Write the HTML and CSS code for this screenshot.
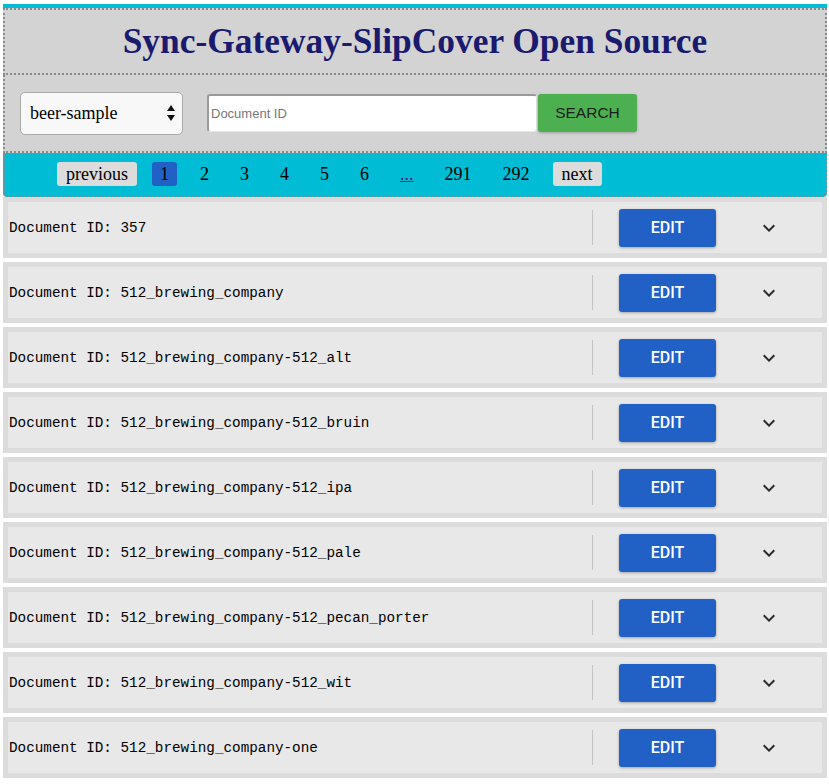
FILE: index.html
```html
<!DOCTYPE html>
<html>
<head>
<meta charset="utf-8">
<title>Sync-Gateway-SlipCover Open Source</title>
<link rel="stylesheet" href="styles.css">
</head>
<body>
<div class="app">
  <header class="title-box">
    <h1 class="title">Sync-Gateway-SlipCover Open Source</h1>
  </header>
  <section class="search-box">
    <div class="select-wrap">
      <select class="db-select"><option>beer-sample</option></select>
      <svg class="select-arrows" width="10" height="18" viewBox="0 0 10 18"><path d="M5 1 L9 7 L1 7 Z M1 11 L9 11 L5 17 Z" fill="#111"/></svg>
    </div>
    <input class="doc-input" type="text" placeholder="Document ID">
    <button class="search-btn">SEARCH</button>
  </section>
  <nav class="pager">
    <button class="pg-btn">previous</button>
    <span class="pg active">1</span>
    <span class="pg">2</span>
    <span class="pg">3</span>
    <span class="pg">4</span>
    <span class="pg">5</span>
    <span class="pg">6</span>
    <a class="pg link" href="#">...</a>
    <span class="pg">291</span>
    <span class="pg">292</span>
    <button class="pg-btn">next</button>
  </nav>
  <ul class="docs">
    <li class="doc"><div class="doc-inner"><span class="doc-id">Document ID: 357</span><span class="divider"></span><button class="edit-btn">EDIT</button><span class="chev"><svg width="24" height="24" viewBox="0 0 24 24"><path d="M16.59 8.59L12 13.17 7.41 8.59 6 10l6 6 6-6z" fill="#2b2b2b"/></svg></span></div></li>
    <li class="doc"><div class="doc-inner"><span class="doc-id">Document ID: 512_brewing_company</span><span class="divider"></span><button class="edit-btn">EDIT</button><span class="chev"><svg width="24" height="24" viewBox="0 0 24 24"><path d="M16.59 8.59L12 13.17 7.41 8.59 6 10l6 6 6-6z" fill="#2b2b2b"/></svg></span></div></li>
    <li class="doc"><div class="doc-inner"><span class="doc-id">Document ID: 512_brewing_company-512_alt</span><span class="divider"></span><button class="edit-btn">EDIT</button><span class="chev"><svg width="24" height="24" viewBox="0 0 24 24"><path d="M16.59 8.59L12 13.17 7.41 8.59 6 10l6 6 6-6z" fill="#2b2b2b"/></svg></span></div></li>
    <li class="doc"><div class="doc-inner"><span class="doc-id">Document ID: 512_brewing_company-512_bruin</span><span class="divider"></span><button class="edit-btn">EDIT</button><span class="chev"><svg width="24" height="24" viewBox="0 0 24 24"><path d="M16.59 8.59L12 13.17 7.41 8.59 6 10l6 6 6-6z" fill="#2b2b2b"/></svg></span></div></li>
    <li class="doc"><div class="doc-inner"><span class="doc-id">Document ID: 512_brewing_company-512_ipa</span><span class="divider"></span><button class="edit-btn">EDIT</button><span class="chev"><svg width="24" height="24" viewBox="0 0 24 24"><path d="M16.59 8.59L12 13.17 7.41 8.59 6 10l6 6 6-6z" fill="#2b2b2b"/></svg></span></div></li>
    <li class="doc"><div class="doc-inner"><span class="doc-id">Document ID: 512_brewing_company-512_pale</span><span class="divider"></span><button class="edit-btn">EDIT</button><span class="chev"><svg width="24" height="24" viewBox="0 0 24 24"><path d="M16.59 8.59L12 13.17 7.41 8.59 6 10l6 6 6-6z" fill="#2b2b2b"/></svg></span></div></li>
    <li class="doc"><div class="doc-inner"><span class="doc-id">Document ID: 512_brewing_company-512_pecan_porter</span><span class="divider"></span><button class="edit-btn">EDIT</button><span class="chev"><svg width="24" height="24" viewBox="0 0 24 24"><path d="M16.59 8.59L12 13.17 7.41 8.59 6 10l6 6 6-6z" fill="#2b2b2b"/></svg></span></div></li>
    <li class="doc"><div class="doc-inner"><span class="doc-id">Document ID: 512_brewing_company-512_wit</span><span class="divider"></span><button class="edit-btn">EDIT</button><span class="chev"><svg width="24" height="24" viewBox="0 0 24 24"><path d="M16.59 8.59L12 13.17 7.41 8.59 6 10l6 6 6-6z" fill="#2b2b2b"/></svg></span></div></li>
    <li class="doc"><div class="doc-inner"><span class="doc-id">Document ID: 512_brewing_company-one</span><span class="divider"></span><button class="edit-btn">EDIT</button><span class="chev"><svg width="24" height="24" viewBox="0 0 24 24"><path d="M16.59 8.59L12 13.17 7.41 8.59 6 10l6 6 6-6z" fill="#2b2b2b"/></svg></span></div></li>
  </ul>
</div>
</body>
</html>
```

FILE: styles.css
```css
html, body {
  margin: 0;
  padding: 0;
  background: #ffffff;
}

body {
  font-family: "Liberation Serif", "Times New Roman", serif;
}

.app {
  width: 824px;
  margin: 4px 0 0 3px;
  border-top: 4px solid #00bcd4;
}

.title-box {
  background: #d3d3d3;
  border: 2px dotted #8a8a8a;
  height: 63px;
  display: flex;
  align-items: center;
  justify-content: center;
}

.title {
  margin: 0;
  font-family: "Liberation Serif", "Times New Roman", serif;
  font-weight: bold;
  font-size: 35.4px;
  color: #1a1a6e;
  line-height: 1;
}

.search-box {
  background: #d3d3d3;
  border: 2px dotted #8a8a8a;
  border-top: none;
  height: 76px;
  display: flex;
  align-items: center;
  padding-left: 15px;
}

.select-wrap {
  width: 163px;
  height: 43px;
  box-sizing: border-box;
  border: 1px solid #a9a9a9;
  border-radius: 5px;
  background: #f8f8f8;
  display: flex;
  align-items: center;
  padding-right: 6px;
  margin-right: 24px;
}

.db-select {
  flex: 1;
  appearance: none;
  -webkit-appearance: none;
  border: none;
  background: transparent;
  font-family: "Liberation Serif", "Times New Roman", serif;
  font-size: 18px;
  color: #000;
  padding: 0 0 0 9px;
  height: 100%;
  outline: none;
}

.select-arrows {
  display: block;
}

.doc-input {
  width: 330px;
  height: 38px;
  box-sizing: border-box;
  border-style: solid;
  border-width: 2px 1px 1px 2px;
  border-color: #9a9a9a #e6e6e6 #e6e6e6 #9a9a9a;
  border-radius: 3px;
  background: #fff;
  font-family: "Liberation Sans", Arial, sans-serif;
  font-size: 13px;
  padding: 0 2px;
  margin: 0;
  outline: none;
}

.doc-input::placeholder {
  color: #777;
}

.search-btn {
  width: 99px;
  height: 38px;
  border: none;
  border-radius: 3px;
  background: #4caf50;
  color: #1d1d1d;
  font-family: "Liberation Sans", Arial, sans-serif;
  font-size: 15.5px;
  margin: 0 0 0 1px;
  box-shadow: 0 1px 3px rgba(0, 0, 0, 0.25);
}

.pager {
  background: #00bcd4;
  border: 2px dotted #8a8a8a;
  border-top: none;
  border-radius: 0 0 4px 4px;
  height: 42px;
  display: flex;
  align-items: center;
  gap: 15px;
  padding-left: 52px;
  font-size: 18px;
}

.pg-btn {
  height: 24px;
  border: none;
  border-radius: 3px;
  background: #dcdcdc;
  font-family: "Liberation Serif", "Times New Roman", serif;
  font-size: 18px;
  color: #000;
  padding: 0 9px;
  margin: 0;
  line-height: 24px;
}

.pg {
  height: 24px;
  line-height: 24px;
  padding: 0 8px;
  color: #000;
  border-radius: 3px;
}

.pg.active {
  background: #2161c6;
}

.pg.link {
  color: #551a8b;
  text-decoration: underline;
}

.docs {
  list-style: none;
  margin: 0;
  padding: 0;
}

.doc {
  background: #dcdcdc;
  padding: 5px 5px;
  margin-bottom: 4px;
}

.doc-inner {
  background: #e8e8e8;
  height: 51px;
  display: flex;
  align-items: center;
  padding-left: 1px;
}

.doc-id {
  flex: 1;
  font-family: "Liberation Mono", "Courier New", monospace;
  font-size: 14.3px;
  color: #000;
}

.divider {
  width: 1px;
  height: 35px;
  background: #c4c4c4;
}

.edit-btn {
  width: 97px;
  height: 38px;
  margin-left: 26px;
  border: none;
  border-radius: 3px;
  background: #2161c6;
  color: #fff;
  font-family: Roboto, "Liberation Sans", sans-serif;
  font-weight: 500;
  font-size: 16px;
  box-shadow: 0 1px 3px rgba(0, 0, 0, 0.3);
}

.chev {
  width: 106px;
  display: flex;
  justify-content: center;
  align-items: center;
}

.chev svg {
  display: block;
}
```
